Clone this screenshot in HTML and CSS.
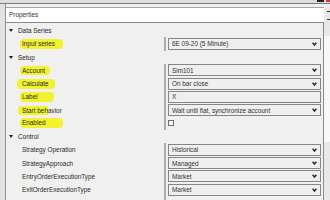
FILE: index.html
```html
<!DOCTYPE html>
<html>
<head>
<meta charset="utf-8">
<link rel="stylesheet" href="styles.css">
</head>
<body>
<div class="top"><span class="btn-dark"></span><span class="btn-red"></span></div>
<div class="main">
  <div class="side"></div>
  <div class="panel">
    <div class="pane">
      <div class="head">Properties</div>
      <div class="grid">
        <div class="cat"><svg class="tri" width="4" height="3" viewBox="0 0 4 3"><polygon points="0,0 4,0 2,3"/></svg>Data Series</div>
        <div class="row"><div class="name"><span class="hl hl-input">Input series</span></div><div class="split"></div><div class="val"><div class="box">6E 09-20 (5 Minute)<svg class="chev" width="5" height="4" viewBox="0 0 5 4"><polyline points="0.6,0.7 2.5,3 4.4,0.7"/></svg></div></div></div>
        <div class="cat"><svg class="tri" width="4" height="3" viewBox="0 0 4 3"><polygon points="0,0 4,0 2,3"/></svg>Setup</div>
        <div class="row"><div class="name"><span class="hl hl-account">Account</span></div><div class="split"></div><div class="val"><div class="box">Sim101<svg class="chev" width="5" height="4" viewBox="0 0 5 4"><polyline points="0.6,0.7 2.5,3 4.4,0.7"/></svg></div></div></div>
        <div class="row"><div class="name"><span class="hl hl-calc">Calculate</span></div><div class="split"></div><div class="val"><div class="box">On bar close<svg class="chev" width="5" height="4" viewBox="0 0 5 4"><polyline points="0.6,0.7 2.5,3 4.4,0.7"/></svg></div></div></div>
        <div class="row"><div class="name"><span class="hl hl-label">Label</span></div><div class="split"></div><div class="val"><div class="box">X</div></div></div>
        <div class="row"><div class="name"><span class="hl hl-start">Start behavior</span></div><div class="split"></div><div class="val"><div class="box">Wait until flat, synchronize account<svg class="chev" width="5" height="4" viewBox="0 0 5 4"><polyline points="0.6,0.7 2.5,3 4.4,0.7"/></svg></div></div></div>
        <div class="row"><div class="name"><span class="hl hl-enabled">Enabled</span></div><div class="split"></div><div class="val"><span class="check"></span></div></div>
        <div class="cat"><svg class="tri" width="4" height="3" viewBox="0 0 4 3"><polygon points="0,0 4,0 2,3"/></svg>Control</div>
        <div class="row"><div class="name">Strategy Operation</div><div class="split"></div><div class="val"><div class="box">Historical<svg class="chev" width="5" height="4" viewBox="0 0 5 4"><polyline points="0.6,0.7 2.5,3 4.4,0.7"/></svg></div></div></div>
        <div class="row"><div class="name">StrategyApproach</div><div class="split"></div><div class="val"><div class="box">Managed<svg class="chev" width="5" height="4" viewBox="0 0 5 4"><polyline points="0.6,0.7 2.5,3 4.4,0.7"/></svg></div></div></div>
        <div class="row"><div class="name">EntryOrderExecutionType</div><div class="split"></div><div class="val"><div class="box">Market<svg class="chev" width="5" height="4" viewBox="0 0 5 4"><polyline points="0.6,0.7 2.5,3 4.4,0.7"/></svg></div></div></div>
        <div class="row"><div class="name">ExitOrderExecutionType</div><div class="split"></div><div class="val"><div class="box">Market<svg class="chev" width="5" height="4" viewBox="0 0 5 4"><polyline points="0.6,0.7 2.5,3 4.4,0.7"/></svg></div></div></div>
        <div class="row"><div class="name"></div><div class="split"></div><div class="val"><span class="check"></span></div></div>
      </div>
    </div>
    <div class="scroll"><div class="marks"><i></i><i></i></div><div class="thumb"></div></div>
  </div>
</div>
</body>
</html>
```

FILE: styles.css
```css
html, body {
  margin: 0;
  padding: 0;
}
body {
  width: 330px;
  height: 200px;
  overflow: hidden;
  background: #f0f0f0;
  font-family: "Liberation Sans", Arial, sans-serif;
  font-size: 6.4px;
  color: #2a2a2a;
}
.top {
  height: 3px;
  background: #dedede;
  border-bottom: 1px solid #7c7c7c;
  display: flex;
  justify-content: flex-end;
  align-items: flex-start;
  gap: 2px;
}
.btn-dark {
  width: 7px;
  height: 2px;
  background: #222;
}
.btn-red {
  width: 4px;
  height: 2px;
  background: #d43a2a;
}
.main {
  display: flex;
  height: 196px;
}
.side {
  width: 5px;
  background: #e2e2e2;
  border-right: 1px solid #909090;
}
.panel {
  flex: 1;
  display: flex;
  padding-top: 3px;
}
.pane {
  width: 318px;
  display: flex;
  flex-direction: column;
}
.head {
  height: 14px;
  line-height: 14px;
  background: #ffffff;
  border-top: 1px solid #a4a4a4;
  border-bottom: 1px solid #8a8a8a;
  padding-left: 3px;
  color: #333;
}
.grid {
  flex: 1;
  padding-top: 1px;
  border-right: 1px solid #8a8a8a;
}
.cat {
  height: 13.25px;
  display: flex;
  align-items: center;
  padding-left: 3px;
  color: #1e1e1e;
}
.tri {
  margin-right: 5px;
  fill: #222;
}
.row {
  height: 13.25px;
  display: grid;
  grid-template-columns: 158px 2px 1fr;
  align-items: center;
}
.name {
  padding-left: 16px;
  white-space: nowrap;
}
.split {
  align-self: stretch;
  background: #ababab;
}
.val {
  padding: 0 2px;
  display: flex;
  align-items: center;
}
.box {
  flex: 1;
  height: 12px;
  box-sizing: border-box;
  border: 1px solid #868686;
  background: #efefef;
  display: flex;
  align-items: center;
  justify-content: space-between;
  padding: 0 3px;
  color: #333;
  white-space: nowrap;
}
.chev {
  fill: none;
  stroke: #2a2a2a;
  stroke-width: 1.5;
}
.check {
  width: 6px;
  height: 6px;
  box-sizing: border-box;
  border: 1px solid #6e6e6e;
  background: #f7f7f7;
}
.hl {
  display: inline-block;
  line-height: 10px;
  background: #f2f230;
  border-radius: 4px;
}
.hl-input { margin-left: -2px; padding: 0 8px 0 2px; }
.hl-account { margin-left: -2px; padding: 0 5px 0 2px; line-height: 9px; }
.hl-calc { margin-left: -5px; padding: 0 6px 0 5px; }
.hl-label { margin-left: -2px; padding: 0 16px 0 2px; }
.hl-start { margin-left: -4px; padding: 0 0 0 4px; line-height: 9px; background: linear-gradient(to right, #f2f230 0, #f2f230 30px, transparent 30px); }
.hl-enabled { margin-left: -2px; padding: 0 18px 0 2px; }
.scroll {
  flex: 1;
  display: flex;
  flex-direction: column;
  background: #e8e8e8;
}
.marks {
  height: 16px;
  display: flex;
  flex-direction: column;
  justify-content: space-around;
  align-items: flex-end;
}
.marks i {
  display: block;
  width: 3px;
  height: 1px;
  background: #333;
}
.thumb {
  margin-top: 13px;
  height: 106px;
  background: #f8f8f8;
}
```
